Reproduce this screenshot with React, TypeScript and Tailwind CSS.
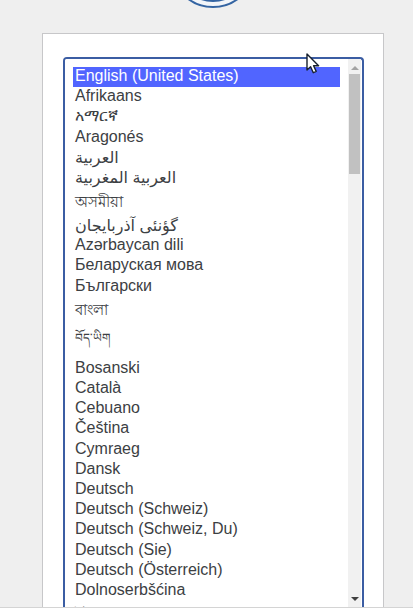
import { useState } from "react"

const languages = [
  { value: "en_US", label: "English (United States)", row: "h-5 text-base" },
  { value: "af", label: "Afrikaans", row: "h-5 text-base" },
  { value: "am", label: "አማርኛ", row: "h-[21px] text-base" },
  { value: "arg", label: "Aragonés", row: "h-5 text-base" },
  { value: "ar", label: "العربية", row: "h-5 text-base" },
  { value: "ary", label: "العربية المغربية", row: "h-[21px] text-base" },
  { value: "as", label: "অসমীয়া", row: "h-[27px] pt-px text-[15px]" },
  { value: "azb", label: "گؤنئی آذربایجان", row: "h-5 text-base" },
  { value: "az", label: "Azərbaycan dili", row: "h-5 text-base" },
  { value: "bel", label: "Беларуская мова", row: "h-[21px] text-base" },
  { value: "bg_BG", label: "Български", row: "h-5 text-base" },
  { value: "bn_BD", label: "বাংলা", row: "h-[27px] pt-px text-[15px]" },
  { value: "bo", label: "བོད་ཡིག", row: "h-[35px] text-xs" },
  { value: "bs_BA", label: "Bosanski", row: "h-5 text-base" },
  { value: "ca", label: "Català", row: "h-5 text-base" },
  { value: "ceb", label: "Cebuano", row: "h-5 text-base" },
  { value: "cs_CZ", label: "Čeština", row: "h-[21px] text-base" },
  { value: "cy", label: "Cymraeg", row: "h-5 text-base" },
  { value: "da_DK", label: "Dansk", row: "h-5 text-base" },
  { value: "de_DE", label: "Deutsch", row: "h-5 text-base" },
  { value: "de_CH", label: "Deutsch (Schweiz)", row: "h-5 text-base" },
  { value: "de_CH_informal", label: "Deutsch (Schweiz, Du)", row: "h-[21px] text-base" },
  { value: "de_DE_formal", label: "Deutsch (Sie)", row: "h-5 text-base" },
  { value: "de_AT", label: "Deutsch (Österreich)", row: "h-5 text-base" },
  { value: "dsb", label: "Dolnoserbšćina", row: "h-5 text-base" },
  { value: "dzo", label: "རྫོང་ཁ", row: "h-[35px] text-xs" },
]

function Logo() {
  return (
    <svg className="-mt-[78px] size-[86px] shrink-0" viewBox="0 0 86 86" aria-hidden="true">
      <circle cx="43" cy="43" r="42" fill="#f2f5f9" stroke="#3464a2" strokeWidth="2" />
      <circle cx="43" cy="43" r="37" fill="#3464a2" />
    </svg>
  )
}

function Scrollbar() {
  return (
    <div className="mr-px flex w-[13px] shrink-0 flex-col items-center bg-[#f1f1f1] pt-[6px] pb-[5px]" aria-hidden="true">
      <svg className="h-[5px] w-2 shrink-0" viewBox="0 0 8 5">
        <path d="M0 5 4 1l4 4z" fill="#a3a3a3" />
      </svg>
      <div className="mt-1 h-[100px] w-[11px] shrink-0 bg-[#c1c1c1]" />
      <svg className="mt-auto h-[5px] w-2 shrink-0" viewBox="0 0 8 5">
        <path d="M0 0h8L4 4z" fill="#404040" />
      </svg>
    </div>
  )
}

function Pointer() {
  return (
    <svg className="pointer-events-none absolute top-[19px] right-[63px] h-[22px] w-[14px]" viewBox="0 0 14 22" aria-hidden="true">
      <path
        d="M1 1v16l3.6-3.3 2.7 6 2.9-1.3-2.6-5.7h5z"
        fill="#fff"
        stroke="#17202e"
        strokeWidth="1.4"
        strokeLinejoin="round"
      />
    </svg>
  )
}

export default function App() {
  const [language, setLanguage] = useState("en_US")

  return (
    <div className="flex h-screen flex-col overflow-hidden border-b border-[#d4d4d4] bg-[#efefef] pr-[29px] pl-[42px] font-['Liberation_Sans',Arial,'DejaVu_Sans','Noto_Sans',sans-serif] text-base">
      <header className="flex h-[33px] shrink-0 justify-center">
        <Logo />
      </header>

      <form className="relative flex min-h-0 flex-1 flex-col border border-b-0 border-[#c7c7c9] bg-white pt-[23px] pr-[19px] pl-5">
        <label htmlFor="language" className="sr-only">
          Select a default language
        </label>
        <div className="flex min-h-0 flex-1 overflow-hidden rounded-t border-2 border-b-0 border-[#3b5da3] bg-white">
          <select
            id="language"
            size={26}
            value={language}
            onChange={(e) => setLanguage(e.target.value)}
            className="min-w-0 flex-1 appearance-none overflow-hidden bg-white pt-2 pr-2 pl-2 text-[#3c4043] outline-none"
          >
            {languages.map(({ value, label, row }) => (
              <option
                key={value}
                value={value}
                className={`${row} px-[2px] leading-[18px] checked:bg-[#5165ff] checked:bg-linear-to-r checked:from-[#5165ff] checked:to-[#5165ff] checked:[-webkit-text-fill-color:#fff]`}
              >
                {label}
              </option>
            ))}
          </select>
          <Scrollbar />
        </div>
        <Pointer />
      </form>
    </div>
  )
}
